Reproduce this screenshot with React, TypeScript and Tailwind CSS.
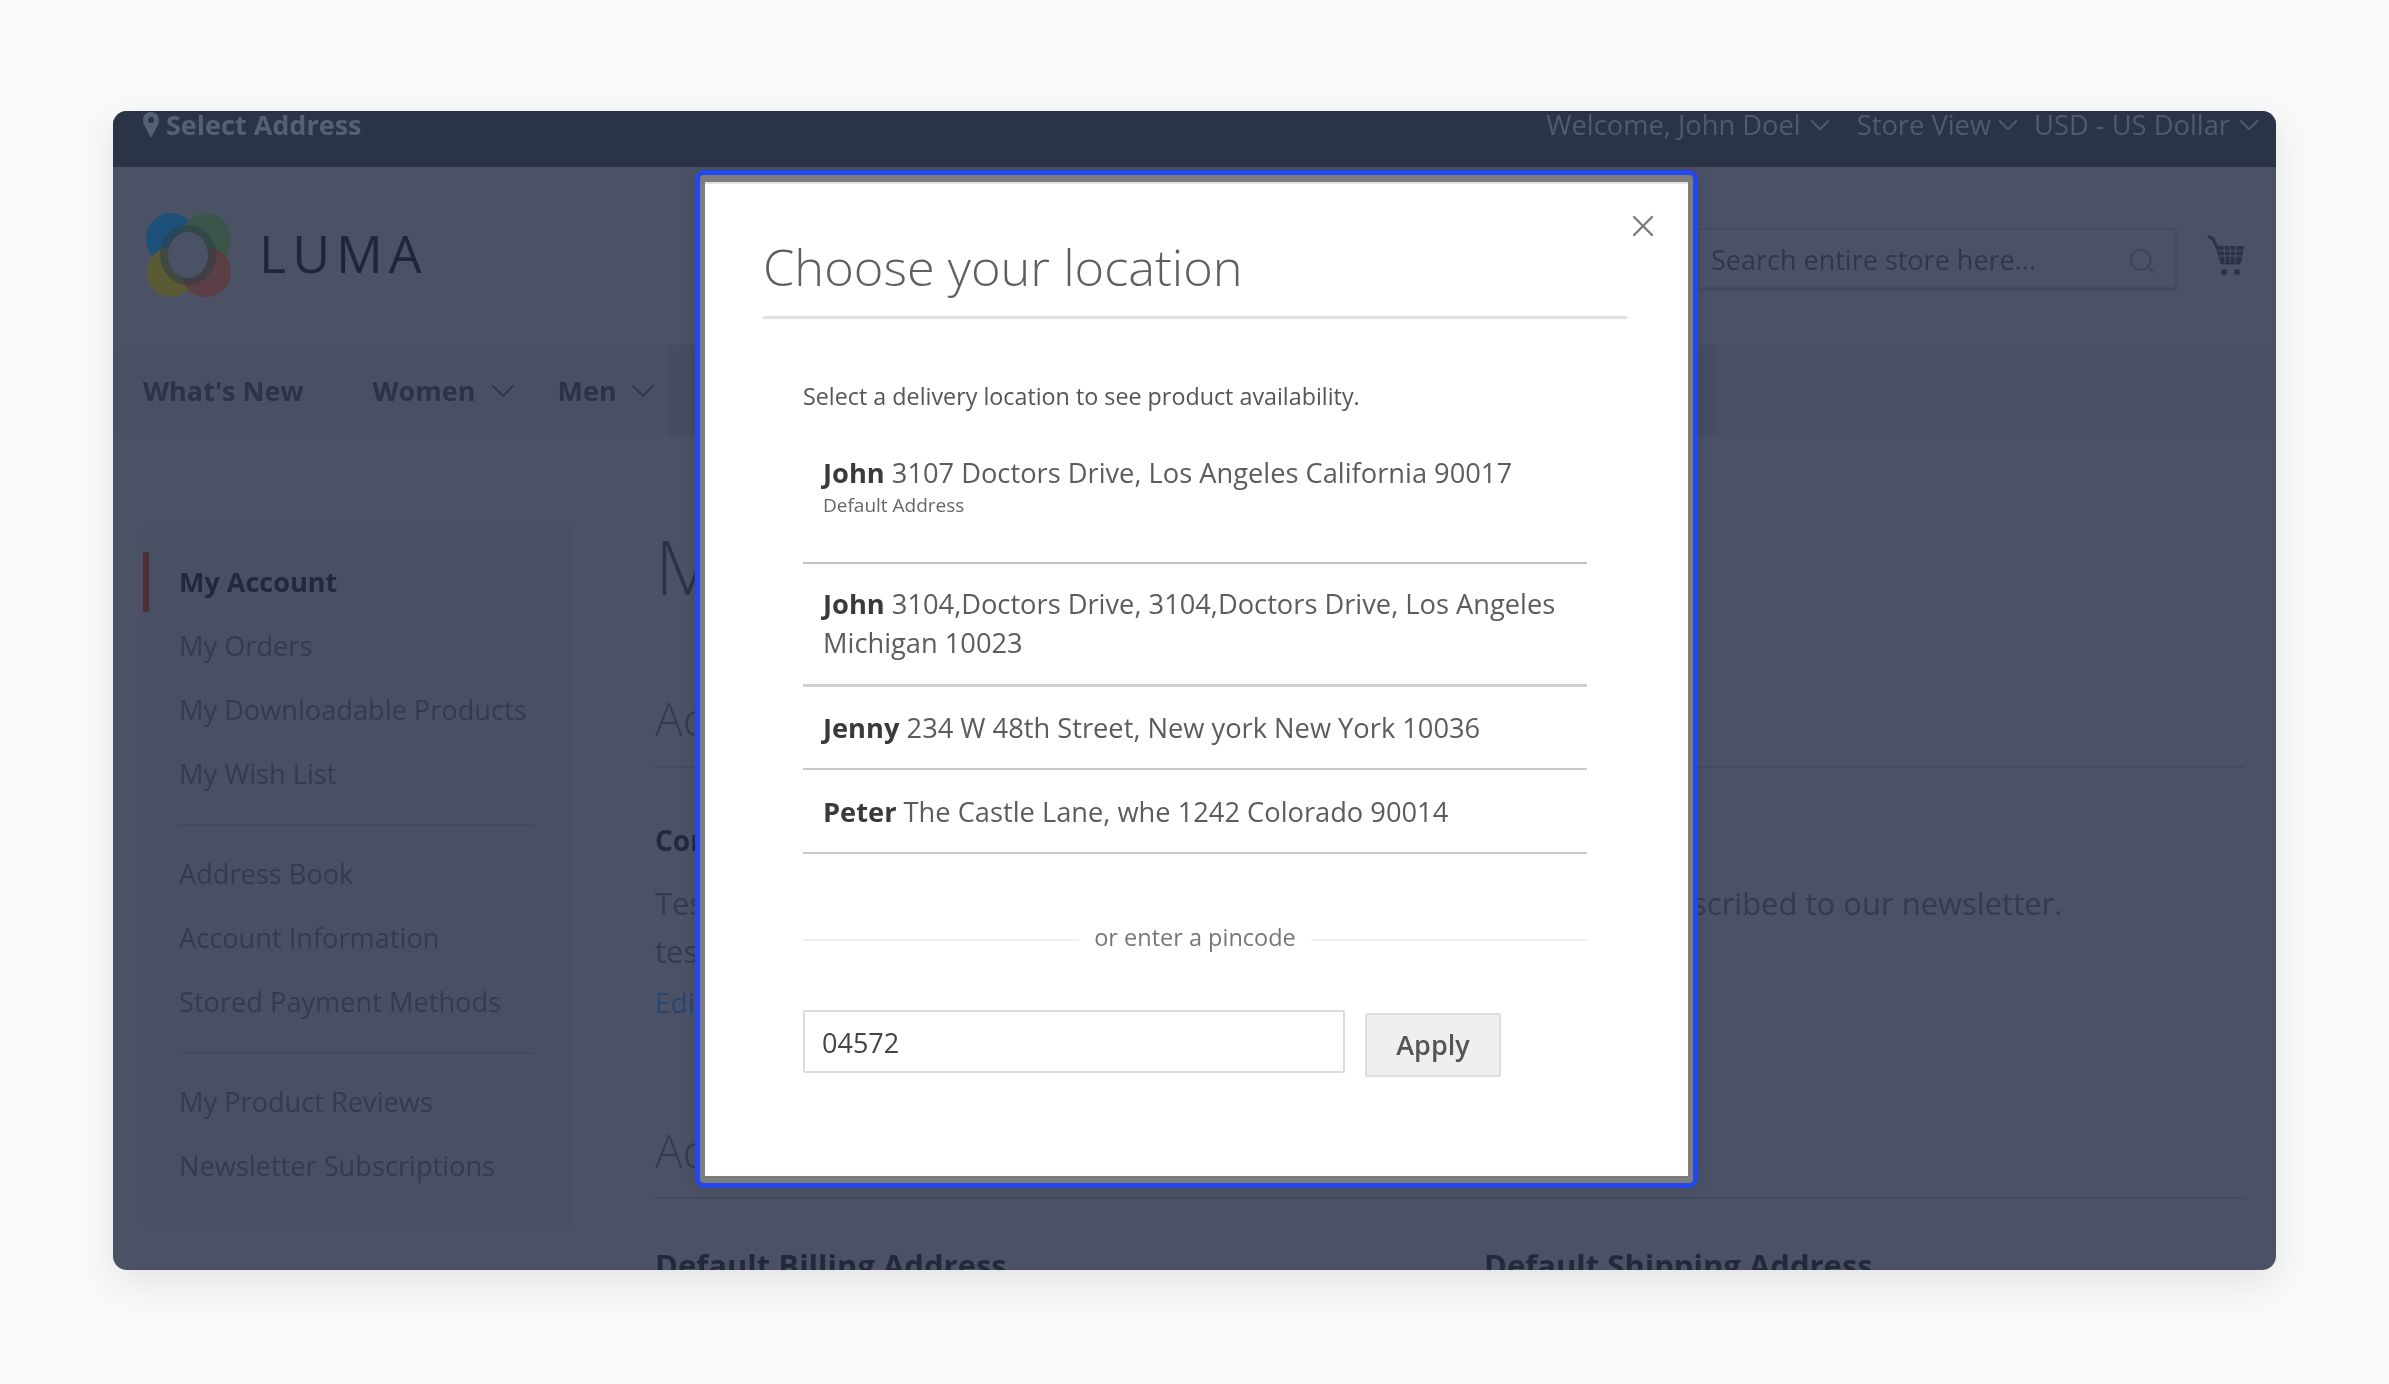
import { ChevronDown, Search, X } from 'lucide-react';

const accountLinks = [
  ['My Orders', 'My Downloadable Products', 'My Wish List'],
  ['Address Book', 'Account Information', 'Stored Payment Methods'],
  ['My Product Reviews', 'Newsletter Subscriptions'],
];

const addresses = [
  { name: 'John', text: '3104,Doctors Drive, 3104,Doctors Drive, Los Angeles Michigan 10023', box: 'pt-[20px] pb-[22px] border-b-[3px] border-[#cfcfcf]' },
  { name: 'Jenny', text: '234 W 48th Street, New york New York 10036', box: 'pt-[21px] pb-[21px] border-b-2 border-[#cbc8c9]' },
  { name: 'Peter', text: 'The Castle Lane, whe 1242 Colorado 90014', box: 'pt-[22px] pb-[21px] border-b-2 border-[#cbc8c9]' },
];

function Logo() {
  return (
    <svg width="86" height="86" viewBox="0 0 86 86" className="shrink-0">
      <ellipse cx="25" cy="27" rx="25" ry="26" fill="#1d5078" />
      <ellipse cx="60" cy="27" rx="25" ry="26" fill="#3a5548" fillOpacity="0.9" />
      <ellipse cx="25" cy="60" rx="24" ry="25" fill="#5c5b30" fillOpacity="0.9" />
      <ellipse cx="60" cy="60" rx="25" ry="25" fill="#5e3c42" fillOpacity="0.9" />
      <ellipse cx="42" cy="43" rx="28" ry="30" fill="#2f3f48" fillOpacity="0.6" />
      <ellipse cx="42" cy="43" rx="20" ry="23" fill="#4c5265" />
    </svg>
  );
}

function Cart() {
  return (
    <svg width="38" height="42" viewBox="0 0 38 42" fill="#2b3447">
      <path d="M1 1l5 3 5 10 4 14h18" fill="none" stroke="#2b3447" strokeWidth="3" />
      <path d="M9 11h28l-3 17H14z" />
      <path d="M11 16h25M12 21h23M17 11l1 17M23 11v17M29 11l-1 17" stroke="#4c5265" strokeWidth="1" fill="none" />
      <circle cx="17" cy="37" r="3" />
      <circle cx="30" cy="37" r="3" />
    </svg>
  );
}

function Pin() {
  return (
    <svg width="16" height="26" viewBox="0 0 16 26" className="shrink-0">
      <path fillRule="evenodd" fill="#566073" d="M8 0c4.4 0 8 3.500 8 8 0 5-4.600 11-8 18C4.600 19 0 13 0 8c0-4.500 3.600-8 8-8zm0 5a3 3 0 100 6 3 3 0 000-6z" />
    </svg>
  );
}

export default function App() {
  return (
    <div className="min-h-[1384px] bg-[#f8f9f9] pl-[113px] pt-[111px] font-['Open_Sans',sans-serif]">
      <div className="relative h-[1159px] w-[2163px] overflow-hidden rounded-[14px] bg-[#4c5265] shadow-[0_12px_36px_rgba(0,0,0,0.09)]">
        <div className="blur-[0.7px]">
          {/* top bar */}
          <div className="flex h-[56px] items-start justify-between bg-[#2b3447] pl-[30px] pr-[10px] text-[#566073]">
            <div className="flex h-[28px] items-center gap-[7px] text-[27px] font-bold leading-[28px]">
              <Pin />
              <span>Select Address</span>
            </div>
            <div className="flex h-[28px] items-center text-[27.300px] leading-[28px] text-[#505a6d]">
              <span>Welcome, John Doel</span>
              <ChevronDown size={34} strokeWidth={1.4} className="ml-[2px] mr-[20px]" />
              <span>Store View</span>
              <ChevronDown size={34} strokeWidth={1.4} className="mr-[9px]" />
              <span>USD - US Dollar</span>
              <ChevronDown size={34} strokeWidth={1.4} className="ml-[2px]" />
            </div>
          </div>

          {/* logo and search */}
          <div className="flex h-[178px] items-start pl-[33px]">
            <div className="mt-[45px] flex items-center gap-[27px]">
              <Logo />
              <span className="-mt-[4px] text-[52px] font-medium leading-[60px] tracking-[6px] text-[#1e2638]">LUMA</span>
            </div>
            <div className="ml-auto mt-[61px] flex h-[63px] w-[480px] items-center justify-between border-2 border-b-[4px] border-[#454b5e] pl-[12px] pr-[18px] pt-[4px] text-[27px] text-[#2f374a]">
              <span>Search entire store here...</span>
              <Search size={30} strokeWidth={1.5} className="text-[#3c4456]" />
            </div>
            <div className="ml-[30px] mr-[31px] mt-[68px]">
              <Cart />
            </div>
          </div>

          {/* nav */}
          <div className="flex h-[92px] items-center bg-[#495064] pl-[30px] text-[27px] font-bold text-[#2b3345]">
            <span>What's New</span>
            <span className="ml-[69px]">Women</span>
            <ChevronDown size={40} strokeWidth={1} className="ml-[7px]" />
            <span className="ml-[35px]">Men</span>
            <ChevronDown size={40} strokeWidth={1} className="ml-[6px]" />
            <div className="ml-[6px] h-full w-[1045px] bg-[#464d60]" />
          </div>

          {/* account page */}
          <div className="flex pl-[30px] pt-[88px]">
            <div className="h-[702px] w-[428px] shrink-0 bg-[#4a5064] pt-[27px]">
              <div className="flex h-[60px] items-center border-l-[6px] border-[#4f2e36] pl-[30px] text-[27px] font-bold leading-[64px] text-[#23293a]">My Account</div>
              {accountLinks.map((group, i) => (
                <div key={i} className={i > 0 ? 'ml-[36px] mr-[36px] mt-[18px] border-t-2 border-[#454b5e] pt-[16px]' : 'ml-[36px] mr-[36px] pt-[2px]'}>
                  {group.map(link => (
                    <div key={link} className="h-[64px] text-[27.200px] leading-[64px] text-[#343b4e]">{link}</div>
                  ))}
                </div>
              ))}
            </div>

            <div className="ml-[84px] mr-[31px] flex-1 text-[#343b4e]">
              <div className="-mt-[4px] text-[76px] font-light leading-[90px] text-[#2b3345]">My Account</div>
              <div className="mt-[77px] border-b-2 border-[#454b5e] pb-[18px] text-[46px] font-light leading-[60px]">Account Information</div>
              <div className="flex pt-[50px] text-[31px] leading-[48px]">
                <div className="w-[829px]">
                  <div className="text-[28px] font-bold leading-[44px] text-[#23293a]">Contact Information</div>
                  <div className="mt-[17px]">Test User</div>
                  <div>test@example.com</div>
                  <div className="mt-[3px] text-[28px] text-[#2a4570]">Edit</div>
                </div>
                <div className="pt-[61px]">You aren't subscribed to our newsletter.</div>
              </div>
              <div className="mt-[94px] border-b-2 border-[#454b5e] pb-[17px] text-[46px] font-light leading-[60px]">Address Book</div>
              <div className="flex pt-[48px] text-[31px] font-bold leading-[36px] text-[#23293a]">
                <div className="w-[829px]">Default Billing Address</div>
                <div>Default Shipping Address</div>
              </div>
            </div>
          </div>
        </div>

        {/* modal */}
        <div className="absolute left-[582px] top-[59px] w-[1003px] rounded-[9px] border-[5px] border-[#2548ee] shadow-[0_0_14px_rgba(0,0,0,0.12)]">
          <div className="relative h-[1008px] rounded-[4px] border-x-[5px] border-y-[7px] border-[#7d7d7d] bg-white">
            <div className="h-[2px] bg-[#e2e2e2]" />
            <button className="absolute right-[27px] top-[26px] text-[#7c7c7c]">
              <X size={36} strokeWidth={1.6} />
            </button>
            <div className="blur-[0.35px]">
              <div className="pl-[58px] pr-[61px] pt-[51px]">
                <div className="border-b-[3px] border-[#e1e1e1] pb-[17px] text-[50.500px] font-light leading-[64px] text-[#5f5f5f]">Choose your location</div>
              </div>
              <div className="pl-[98px] pr-[101px]">
                <div className="pt-[59px] text-[23.300px] leading-[36px] text-[#555]">Select a delivery location to see product availability.</div>
                <div className="border-b-2 border-[#c4bfc0] pb-[45px] pl-[20px] pt-[39px]">
                  <div className="text-[27.250px] leading-[40px] text-[#5c5c5c]"><b className="font-bold text-[#3a3a3a]">John</b> 3107 Doctors Drive, Los Angeles California 90017</div>
                  <div className="text-[19px] leading-[24px] text-[#666]">Default Address</div>
                </div>
                {addresses.map(a => (
                  <div key={a.name} className={`${a.box} pl-[20px] text-[27.250px] leading-[39px] text-[#5c5c5c]`}>
                    <b className="font-bold text-[#3a3a3a]">{a.name}</b> {a.text}
                  </div>
                ))}
                <div className="mt-[65px] flex items-center text-[23.500px] leading-[36px] text-[#777]">
                  <div className="mt-[5px] h-[2px] flex-1 bg-[#efefef]" />
                  <span className="mx-[15px]">or enter a pincode</span>
                  <div className="mt-[5px] h-[2px] flex-1 bg-[#efefef]" />
                </div>
                <div className="mt-[55px] flex items-start">
                  <div className="flex h-[63px] w-[542px] items-center rounded-[2px] border-2 border-[#dcdcdc] pl-[17px] pt-[3px] text-[27px] text-[#444]">04572</div>
                  <button className="ml-[20px] mt-[3px] h-[64px] w-[136px] rounded-[3px] border-2 border-[#dedede] bg-[#efefef] text-[27px] font-semibold text-[#555]">Apply</button>
                </div>
              </div>
            </div>
          </div>
        </div>
      </div>
    </div>
  );
}
